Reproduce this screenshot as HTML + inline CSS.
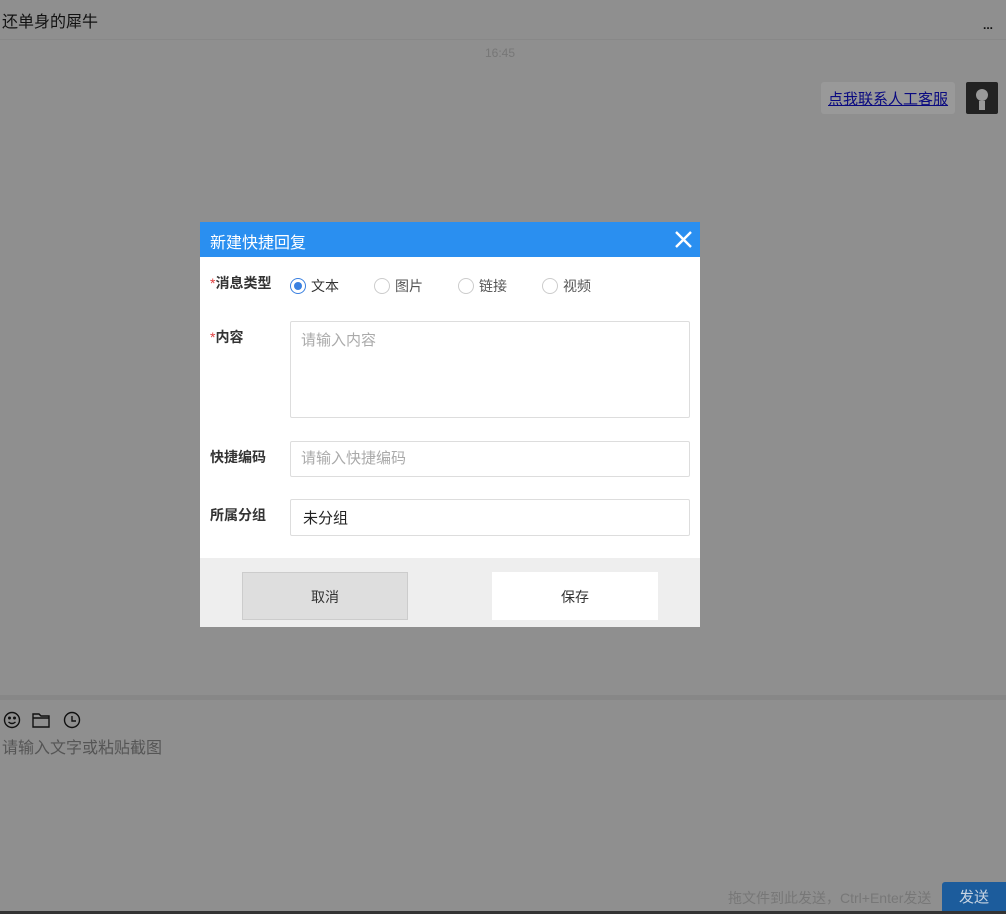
<!DOCTYPE html>
<html><head><meta charset="utf-8"><style>
body{margin:0;width:1006px;height:914px;overflow:hidden;background:#8f8f8f;font-family:"Liberation Sans","Noto Sans CJK SC",sans-serif;position:relative}
.a{position:absolute}
.lbl{position:absolute;left:10px;font-size:14px;font-weight:bold;color:#333}
.lbl i{color:#e04040;font-style:normal;font-weight:normal}
.rad{position:absolute;top:278px;width:16px;height:16px;border:1px solid #ccc;border-radius:50%;background:#fff;box-sizing:border-box}
.rt{position:absolute;top:276px;font-size:14px;color:#555}
.inp{position:absolute;left:90px;width:400px;border:1px solid #ddd;border-radius:2px;box-sizing:border-box;background:#fff;font-size:15px;color:#aaa;padding-left:10px}
</style></head><body>
<div class="a" style="left:2px;top:8px;font-size:16px;color:#111">还单身的犀牛</div>
<div class="a" style="left:983px;top:18px;font-size:12px;color:#111;font-weight:bold">...</div>
<div class="a" style="left:0;top:39px;width:1006px;height:1px;background:#888"></div>
<div class="a" style="left:485px;top:46px;font-size:12px;color:#777">16:45</div>
<div class="a" style="left:821px;top:82px;width:134px;height:32px;background:#999;border-radius:3px"></div>
<div class="a" style="left:828px;top:88px;font-size:15px;color:#0a0a80;text-decoration:underline">点我联系人工客服</div>
<div class="a" style="left:966px;top:82px;width:32px;height:32px;background:#222;border-radius:2px"><svg width="32" height="32"><circle cx="16" cy="13" r="6" fill="#999"/><rect x="13" y="19" width="6" height="9" fill="#999"/></svg></div>

<div class="a" style="left:0;top:695px;width:1006px;height:5px;background:#878787"></div>
<svg class="a" style="left:3px;top:711px" width="80" height="18" fill="none" stroke="#111" stroke-width="1.4">
<circle cx="9" cy="9" r="7.5"/><circle cx="6.5" cy="7" r=".8" fill="#111"/><circle cx="11.5" cy="7" r=".8" fill="#111"/><path d="M5.5 11q3.5 3 7 0"/>
<path d="M30 3h6l2 2h8v11H30z M30 7h16"/>
<circle cx="69" cy="9" r="7.5"/><path d="M69 5v5h4"/></svg>
<div class="a" style="left:2px;top:734px;font-size:16px;color:#555">请输入文字或粘贴截图</div>
<div class="a" style="left:728px;top:888px;font-size:14px;color:#777">拖文件到此发送，Ctrl+Enter发送</div>
<div class="a" style="left:942px;top:882px;width:64px;height:30px;background:#1c5c9c;border-radius:3px 0 0 0;color:#c8d4e2;font-size:15px;text-align:center;line-height:32px">发送</div>
<div class="a" style="left:0;top:911px;width:1006px;height:3px;background:#333"></div>

<div class="a" style="left:200px;top:222px;width:500px;height:405px;background:#fff">
<div class="a" style="left:0;top:0;width:500px;height:35px;background:#2a8ff0"></div>
<div class="a" style="left:10px;top:7px;font-size:16px;color:#fff">新建快捷回复</div>
<svg class="a" style="left:475px;top:9px" width="17" height="17" stroke="#fff" stroke-width="2.4"><path d="M1 1L16 16M16 1L1 16"/></svg>
<div class="lbl" style="top:51px"><i>*</i>消息类型</div>
<div class="lbl" style="top:105px"><i>*</i>内容</div>
<div class="lbl" style="top:225px">快捷编码</div>
<div class="lbl" style="top:283px">所属分组</div>
</div>
<div class="rad" style="left:290px;border:1px solid #3a80e0"><div style="margin:3px;width:8px;height:8px;border-radius:50%;background:#3a80e0"></div></div>
<div class="rt" style="left:311px;color:#333">文本</div>
<div class="rad" style="left:374px"></div><div class="rt" style="left:395px">图片</div>
<div class="rad" style="left:458px"></div><div class="rt" style="left:479px">链接</div>
<div class="rad" style="left:542px"></div><div class="rt" style="left:563px">视频</div>
<div class="inp" style="left:290px;top:321px;height:97px;padding-top:7px">请输入内容</div>
<div class="inp" style="left:290px;top:441px;height:36px;line-height:33px">请输入快捷编码</div>
<div class="inp" style="left:290px;top:499px;height:37px;line-height:37px;color:#222;padding-left:12px">未分组</div>
<div class="a" style="left:200px;top:558px;width:500px;height:69px;background:#eee"></div>
<div class="a" style="left:242px;top:572px;width:166px;height:48px;background:#dedede;border:1px solid #ccc;box-sizing:border-box;text-align:center;line-height:48px;font-size:14px;color:#333">取消</div>
<div class="a" style="left:492px;top:572px;width:166px;height:48px;background:#fff;text-align:center;line-height:50px;font-size:14px;color:#333">保存</div>
</body></html>
